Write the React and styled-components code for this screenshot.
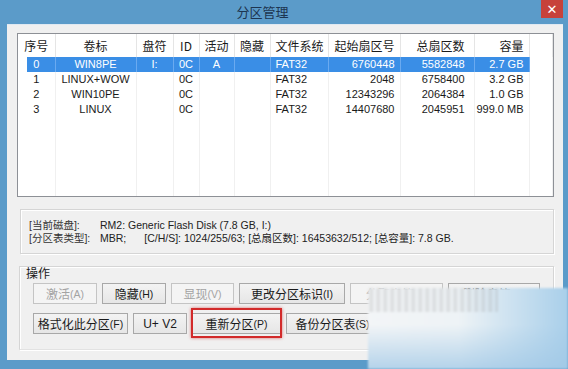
import React from "react";
import styled, { createGlobalStyle } from "styled-components";

const GlobalStyle = createGlobalStyle`
  *, *::before, *::after {
    box-sizing: border-box;
  }
  body {
    margin: 0;
    font-family: "Liberation Sans", "Noto Sans CJK SC", sans-serif;
    font-size: 11px;
    color: #111;
  }
`;

const Window = styled.div`
  position: relative;
  display: flex;
  flex-direction: column;
  width: 568px;
  height: 369px;
  background: #5b9bc9;
  overflow: hidden;
`;

const TitleBar = styled.div`
  display: flex;
  align-items: flex-start;
  height: 24px;
`;

const Title = styled.div`
  flex: 1;
  padding-right: 16px;
  line-height: 24px;
  text-align: center;
  font-family: "Noto Sans CJK SC", sans-serif;
  font-size: 13px;
  color: #1d3550;
`;

const CloseButton = styled.div`
  display: flex;
  justify-content: center;
  align-items: center;
  width: 22px;
  height: 18px;
  margin-right: 5px;
  background: #c7423b;
  color: #fff;
  font-size: 13px;
  font-family: "DejaVu Sans", sans-serif;
`;

const Client = styled.div`
  display: flex;
  flex-direction: column;
  flex: 1;
  margin: 0 5px 9px 7px;
  padding: 8px 9px 0 10px;
  border-top: 1px solid #dfe9f2;
  background: #f0f0f0;
`;

const ListBox = styled.div`
  flex: none;
  height: 164px;
  border: 1px solid #8d9096;
  background: #fff;
  overflow: hidden;
`;

const Table = styled.table`
  width: 100%;
  border-collapse: collapse;
  table-layout: fixed;
`;

const sidePad = ({ align, pad }) =>
  align === "left"
    ? `padding: 0 0 0 ${pad || 0}px;`
    : align === "right"
    ? `padding: 0 ${pad || 0}px 0 0;`
    : "padding: 0;";

const HeadCell = styled.th`
  height: 23px;
  ${sidePad}
  border-right: 1px solid #e5e5e5;
  font-family: "Noto Sans CJK SC", sans-serif;
  font-size: 12px;
  font-weight: normal;
  text-align: ${({ align }) => align || "center"};
  vertical-align: middle;
  white-space: nowrap;
  overflow: hidden;
  color: #1a1a1a;
`;

const Cell = styled.td`
  height: 15px;
  ${sidePad}
  border-right: 1px solid ${({ selected }) => (selected ? "#6aaaf0" : "#f0f0f0")};
  background: ${({ selected, first }) =>
    selected
      ? first
        ? "linear-gradient(to right, #fff 9px, #3a8ee6 9px)"
        : "#3a8ee6"
      : "transparent"};
  color: ${({ selected }) => (selected ? "#fff" : "#1a1a1a")};
  font-size: 11px;
  line-height: 15px;
  text-align: ${({ align }) => align || "center"};
  white-space: nowrap;
  overflow: hidden;
`;

const FillCell = styled.td`
  height: 120px;
  border-right: 1px solid #f0f0f0;
`;

const InfoBox = styled.div`
  flex: none;
  display: grid;
  grid-template-columns: 71px auto;
  align-content: start;
  height: 45px;
  margin: 12px 0 0 3px;
  padding: 9px 0 0 8px;
  border: 1px solid #d5d5d5;
  box-shadow: inset 1px 1px 0 #fff, 1px 1px 0 #fff;
  line-height: 13px;
  color: #222;
`;

const InfoLabel = styled.span`
  font-size: 10.5px;
  white-space: nowrap;
  color: #333;
`;

const InfoValue = styled.span`
  white-space: nowrap;
  font-size: 10.5px;
`;

const Gap = styled.span`
  display: inline-block;
  width: ${({ w }) => w}px;
`;

const Group = styled.div`
  flex: none;
  display: flex;
  flex-direction: column;
  margin: 12px 0 0 2px;
  padding: 0 12px 15px 6px;
  border: 1px solid #d5d5d5;
  border-bottom-color: #e2e2e2;
  box-shadow: inset 1px 1px 0 #fff, 1px 1px 0 #fff;
`;

const GroupLabel = styled.div`
  line-height: 12px;
  margin-bottom: 4px;
  font-family: "Noto Sans CJK SC", sans-serif;
  font-size: 12px;
  color: #1a1a1a;
`;

const ButtonRow = styled.div`
  display: flex;
  gap: 5px;
  margin-left: 7px;
  margin-bottom: ${({ last }) => (last ? 0 : 9)}px;
`;

const Button = styled.div`
  position: relative;
  display: flex;
  justify-content: center;
  align-items: center;
  width: ${({ w }) => w}px;
  height: 21px;
  border: 1px solid ${({ disabled }) => (disabled ? "#c4c4c4" : "#a8a8a8")};
  background: ${({ disabled }) =>
    disabled ? "#f4f4f4" : "linear-gradient(#f3f3f3, #e6e6e6)"};
  color: ${({ disabled }) => (disabled ? "#a3a3a3" : "#1a1a1a")};
  font-size: 12px;
  white-space: nowrap;

  ${({ marked }) =>
    marked &&
    `
    &::after {
      content: "";
      position: absolute;
      top: -6px;
      bottom: -5px;
      left: -2px;
      right: -2px;
      border: 2px solid #d22a2a;
      box-shadow: 0 0 3px rgba(200, 30, 30, 0.6);
    }
  `}
`;

const Key = styled.span`
  font-size: 10.5px;
`;

const Watermark = styled.div`
  position: absolute;
  left: 368px;
  top: 288px;
  right: 0;
  bottom: 0;
  background:
    repeating-linear-gradient(
      to right,
      rgba(150, 150, 150, 0) 0px,
      rgba(150, 150, 150, 0.28) 3px,
      rgba(150, 150, 150, 0) 7px
    ) 0 0 / 130px 24px no-repeat,
    linear-gradient(to bottom, rgba(255, 255, 255, 0) 45%, rgba(160, 200, 230, 0.75) 100%),
    linear-gradient(to right, #f3f5f7 0%, #eef3f6 45%, #a9cfea 100%);
  filter: blur(1px);
`;

const columns = [
  { title: "序号", w: 37 },
  { title: "卷标", w: 81 },
  { title: "盘符", w: 37 },
  { title: "ID", w: 26 },
  { title: "活动", w: 35 },
  { title: "隐藏", w: 36 },
  { title: "文件系统", w: 58, align: "left", pad: 5 },
  { title: "起始扇区号", w: 72, align: "right", pad: 5 },
  { title: "总扇区数", w: 74, align: "right", pad: 9 },
  { title: "容量", w: 55, align: "right", pad: 5 },
];

const rows = [
  ["0", "WIN8PE", "I:", "0C", "A", "", "FAT32", "6760448", "5582848", "2.7 GB"],
  ["1", "LINUX+WOW", "", "0C", "", "", "FAT32", "2048", "6758400", "3.2 GB"],
  ["2", "WIN10PE", "", "0C", "", "", "FAT32", "12343296", "2064384", "1.0 GB"],
  ["3", "LINUX", "", "0C", "", "", "FAT32", "14407680", "2045951", "999.0 MB"],
];

const label = (text, key) => (
  <>
    {text}
    <Key>({key})</Key>
  </>
);

const App = () => {
  return (
    <>
      <GlobalStyle />
      <Window>
        <TitleBar>
          <Title>分区管理</Title>
          <CloseButton>✕</CloseButton>
        </TitleBar>
        <Client>
          <ListBox>
            <Table>
              <colgroup>
                {columns.map((c) => (
                  <col key={c.title} style={{ width: c.w }} />
                ))}
                <col />
              </colgroup>
              <thead>
                <tr>
                  {columns.map((c) => (
                    <HeadCell key={c.title} align={c.align} pad={c.pad}>
                      {c.title}
                    </HeadCell>
                  ))}
                  <HeadCell />
                </tr>
              </thead>
              <tbody>
                {rows.map((r, i) => (
                  <tr key={r[0]}>
                    {r.map((v, j) => (
                      <Cell
                        key={j}
                        selected={i === 0}
                        first={j === 0}
                        align={columns[j].align}
                        pad={columns[j].pad}
                      >
                        {v}
                      </Cell>
                    ))}
                    <Cell />
                  </tr>
                ))}
                <tr>
                  {columns.map((c) => (
                    <FillCell key={c.title} />
                  ))}
                  <FillCell />
                </tr>
              </tbody>
            </Table>
          </ListBox>

          <InfoBox>
            <InfoLabel>[当前磁盘]:</InfoLabel>
            <InfoValue>RM2: Generic Flash Disk (7.8 GB, I:)</InfoValue>
            <InfoLabel>[分区表类型]:</InfoLabel>
            <InfoValue>
              MBR;
              <Gap w={18} />
              [C/H/S]: 1024/255/63; [总扇区数]: 16453632/512; [总容量]: 7.8 GB.
            </InfoValue>
          </InfoBox>

          <Group>
            <GroupLabel>操作</GroupLabel>
            <ButtonRow>
              <Button w={64} disabled>{label("激活", "A")}</Button>
              <Button w={64}>{label("隐藏", "H")}</Button>
              <Button w={63} disabled>{label("显现", "V")}</Button>
              <Button w={106}>{label("更改分区标识", "I")}</Button>
              <Button w={93} disabled>{label("分配盘符", "L")}</Button>
              <Button w={92}>{label("删除盘符", "D")}</Button>
            </ButtonRow>
            <ButtonRow last>
              <Button w={95}>{label("格式化此分区", "F")}</Button>
              <Button w={54}>U+ V2</Button>
              <Button w={89} marked>{label("重新分区", "P")}</Button>
              <Button w={93}>{label("备份分区表", "S")}</Button>
              <Button w={93}>{label("恢复分区表", "R")}</Button>
            </ButtonRow>
          </Group>
        </Client>
        <Watermark />
      </Window>
    </>
  );
};

export default App;
